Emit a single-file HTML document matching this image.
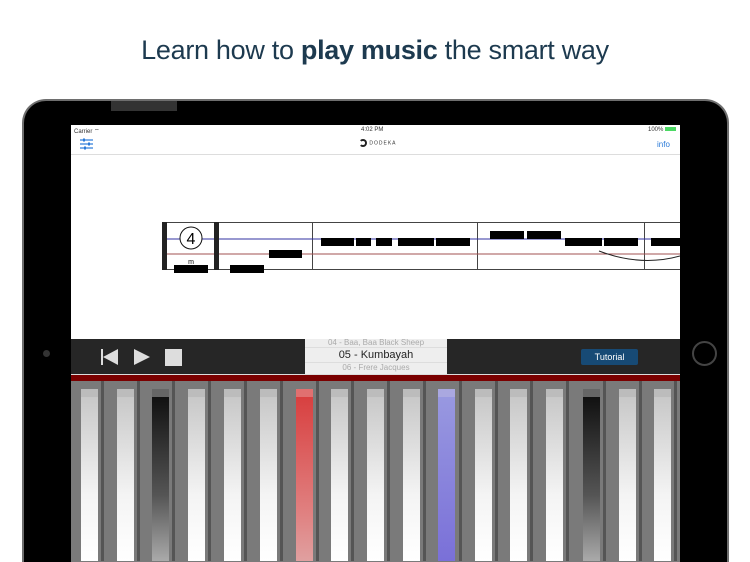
<!DOCTYPE html>
<html style="width:750px;height:562px;overflow:hidden"><head><meta charset="utf-8"><style>
*{margin:0;padding:0;box-sizing:border-box}
body{width:750px;height:562px;background:#fff;position:relative;overflow:hidden;font-family:"Liberation Sans",sans-serif}
.h{position:absolute;top:35px;left:0;width:750px;text-align:center;font-size:27px;color:#1d3a4f;font-weight:300;letter-spacing:-0.3px}
.h b{font-weight:700}
.dev{position:absolute;left:22px;top:99px;width:707px;height:463px;background:#000;border:2px solid #6e6e6e;border-bottom:none;border-radius:24px 24px 0 0}
.spk{position:absolute;left:111px;top:101px;width:66px;height:10px;background:#333}
.scr{position:absolute;left:71px;top:125px;width:609px;height:437px;background:#fff;overflow:hidden}
.a{position:absolute}
.key{position:absolute;top:8px;width:17px;height:172px;background:linear-gradient(to bottom,#c8c8c8,#f4f4f4 60%,#fff);border-top:8px solid #bcbcbc}
.gap{position:absolute;top:0;width:3px;height:180px;background:#555}
</style></head><body>
<div class="h">Learn how to <b>play music</b> the smart way</div>
<div class="dev"></div><div class="spk"></div>
<div class="a" style="left:43px;top:350px;width:7px;height:7px;border-radius:50%;background:#333"></div>
<div class="a" style="left:692px;top:341px;width:25px;height:25px;border-radius:50%;border:2px solid #444"></div>
<div class="scr">
 <div class="a" style="left:3px;top:2px;font-size:6px;color:#333">Carrier ⌔</div>
 <div class="a" style="left:290px;top:2px;font-size:6px;color:#333">4:02 PM</div>
 <div class="a" style="left:577px;top:2px;font-size:6px;color:#333">100% <span style="display:inline-block;width:11px;height:4px;background:#4cd964"></span></div>
 <svg class="a" style="left:9px;top:13px" width="14" height="13"><g stroke="#2a7ad8" stroke-width="1.2"><line x1="0" y1="2" x2="13" y2="2"/><line x1="0" y1="6" x2="13" y2="6"/><line x1="0" y1="10" x2="13" y2="10"/></g><g fill="#2a7ad8"><rect x="3" y="0.5" width="2" height="3"/><rect x="8" y="4.5" width="2" height="3"/><rect x="4" y="8.5" width="2" height="3"/></g></svg>
 <div class="a" style="left:288px;top:14px;font-size:5px;color:#333;letter-spacing:1px"><span style="display:inline-block;width:8px;height:8px;border:2px solid #222;border-left-color:transparent;border-radius:50%;vertical-align:middle"></span> DODEKA</div>
 <div class="a" style="left:586px;top:15px;font-size:8px;color:#2a7ad8">info</div>
 <div class="a" style="left:0;top:29px;width:609px;height:1px;background:#ddd"></div>
 <svg class="a" style="left:0;top:0" width="609" height="214">
  <g stroke="#444" stroke-width="1"><line x1="91" y1="97.5" x2="609" y2="97.5"/><line x1="91" y1="144.5" x2="609" y2="144.5"/><line x1="241.5" y1="97" x2="241.5" y2="145"/><line x1="406.5" y1="97" x2="406.5" y2="145"/><line x1="573.5" y1="97" x2="573.5" y2="145"/></g>
  <line x1="91" y1="114" x2="609" y2="114" stroke="#3030a0"/>
  <line x1="91" y1="129" x2="609" y2="129" stroke="#a05050"/>
  <rect x="91" y="97" width="5" height="48" fill="#222"/><rect x="143" y="97" width="5" height="48" fill="#222"/>
  <circle cx="120" cy="113" r="11" fill="#fff" stroke="#111"/><text x="120" y="119" font-size="16" text-anchor="middle" font-family="Liberation Sans">4</text>
  <text x="120" y="139" font-size="7" text-anchor="middle" font-family="Liberation Sans">m</text>
  <g fill="#000"><rect x="103" y="140" width="34" height="8"/><rect x="159" y="140" width="34" height="8"/><rect x="198" y="125" width="33" height="8"/>
  <rect x="250" y="113" width="33" height="8"/><rect x="285" y="113" width="15" height="8"/><rect x="305" y="113" width="16" height="8"/><rect x="327" y="113" width="36" height="8"/><rect x="365" y="113" width="34" height="8"/>
  <rect x="419" y="106" width="34" height="8"/><rect x="456" y="106" width="34" height="8"/><rect x="494" y="113" width="37" height="8"/><rect x="533" y="113" width="34" height="8"/><rect x="580" y="113" width="29" height="8"/></g>
  <path d="M528 126 Q570 142 609 131" fill="none" stroke="#222"/>
 </svg>
 <div class="a" style="left:0;top:214px;width:609px;height:36px;background:#262626"></div>
 <svg class="a" style="left:30px;top:222px" width="90" height="20"><rect x="0" y="2" width="2" height="16" fill="#ddd"/><path d="M2 10 L17 2 V18Z" fill="#ddd"/><path d="M33 2 L49 10 L33 18Z" fill="#ddd"/><rect x="64" y="2" width="17" height="17" fill="#ddd"/></svg>
 <div class="a" style="left:234px;top:214px;width:142px;height:36px;background:#eee;text-align:center;overflow:hidden">
  <div style="font-size:8px;color:#aaa;margin-top:-1px">04 - Baa, Baa Black Sheep</div>
  <div style="font-size:11px;color:#222;line-height:14px;border-top:1px solid #ddd;border-bottom:1px solid #ddd">05 - Kumbayah</div>
  <div style="font-size:8px;color:#aaa">06 - Frere Jacques</div>
 </div>
 <div class="a" style="left:510px;top:224px;width:57px;height:16px;background:#174a75;border-radius:2px;color:#fff;font-size:9px;text-align:center;line-height:16px">Tutorial</div>
 <div class="a" style="left:0;top:249px;width:609px;height:1px;background:#ddd"></div>
 <div class="a" style="left:0;top:250px;width:609px;height:6px;background:#7a0000"></div>
 <div class="a" style="left:0;top:256px;width:609px;height:181px;background:#7a7a7a">
  <div class="key" style="left:10px"></div><div class="key" style="left:46px"></div>
  <div class="key" style="left:81px;background:linear-gradient(to bottom,#111,#555 60%,#aaa);border-top-color:#666"></div>
  <div class="key" style="left:117px"></div><div class="key" style="left:153px"></div><div class="key" style="left:189px"></div>
  <div class="key" style="left:225px;background:linear-gradient(to bottom,#d84040,#e08080 70%,#e0a0a0);border-top-color:#e07070"></div>
  <div class="key" style="left:260px"></div><div class="key" style="left:296px"></div><div class="key" style="left:332px"></div>
  <div class="key" style="left:367px;background:linear-gradient(to bottom,#9898e0,#7a70d8);border-top-color:#aaa8e0"></div>
  <div class="key" style="left:404px"></div><div class="key" style="left:439px"></div><div class="key" style="left:475px"></div>
  <div class="key" style="left:512px;background:linear-gradient(to bottom,#111,#555 60%,#aaa);border-top-color:#666"></div>
  <div class="key" style="left:548px"></div><div class="key" style="left:583px"></div>
  <div class="gap" style="left:30px"></div><div class="gap" style="left:66px"></div><div class="gap" style="left:101px"></div><div class="gap" style="left:137px"></div><div class="gap" style="left:173px"></div><div class="gap" style="left:209px"></div><div class="gap" style="left:245px"></div><div class="gap" style="left:280px"></div><div class="gap" style="left:316px"></div><div class="gap" style="left:352px"></div><div class="gap" style="left:388px"></div><div class="gap" style="left:424px"></div><div class="gap" style="left:459px"></div><div class="gap" style="left:495px"></div><div class="gap" style="left:532px"></div><div class="gap" style="left:568px"></div><div class="gap" style="left:603px"></div>
 </div>
</div>
</body></html>
